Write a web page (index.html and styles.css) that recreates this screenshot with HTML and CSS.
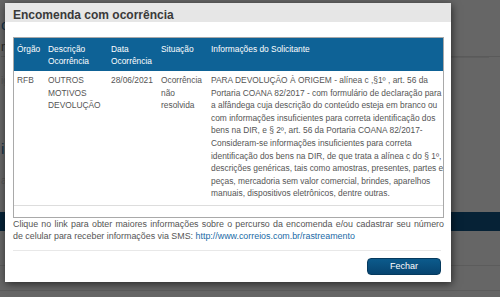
FILE: index.html
```html
<!DOCTYPE html>
<html lang="pt-BR">
<head>
    <meta charset="UTF-8">
    <meta name="viewport" content="width=device-width, initial-scale=1.0">
    <title>Encomenda com ocorrência</title>
    <link rel="stylesheet" href="styles.css">
</head>
<body>
    <div class="page">
        <div class="page-side">
            <p class="side-title">c</p>
            <p class="side-line">m</p>
            <p class="side-small">ig</p>
            <p class="side-link">i</p>
            <p class="side-small">a</p>
        </div>
        <div class="page-bar"></div>
        <div class="page-rule"></div>
        <div class="page-rule low"></div>
    </div>

    <div class="modal">
        <div class="modal-header">
            <h4>Encomenda com ocorrência</h4>
        </div>
        <div class="modal-body">
            <div class="table-wrap">
                <table class="occurrences">
                    <thead>
                        <tr>
                            <th class="col-orgao">Órgão</th>
                            <th class="col-desc">Descrição Ocorrência</th>
                            <th class="col-data">Data Ocorrência</th>
                            <th class="col-sit">Situação</th>
                            <th class="col-info">Informações do Solicitante</th>
                        </tr>
                    </thead>
                    <tbody>
                        <tr>
                            <td>RFB</td>
                            <td>OUTROS MOTIVOS DEVOLUÇÃO</td>
                            <td>28/06/2021</td>
                            <td>Ocorrência não resolvida</td>
                            <td class="col-info">PARA DEVOLUÇÃO À ORIGEM - alínea c ,§1º , art. 56 da<br>Portaria COANA 82/2017 - com formulário de declaração para<br>a alfândega cuja descrição do conteúdo esteja em branco ou<br>com informações insuficientes para correta identificação dos<br>bens na DIR, e § 2º, art. 56 da Portaria COANA 82/2017-<br>Consideram-se informações insuficientes para correta<br>identificação dos bens na DIR, de que trata a alínea c do § 1º,<br>descrições genéricas, tais como amostras, presentes, partes e<br>peças, mercadoria sem valor comercial, brindes, aparelhos<br>manuais, dispositivos eletrônicos, dentre outras.</td>
                        </tr>
                        <tr class="empty-row">
                            <td colspan="5"></td>
                        </tr>
                    </tbody>
                </table>
            </div>
            <p class="notice">Clique no link para obter maiores informações sobre o percurso da encomenda e/ou cadastrar seu número de celular para receber informações via SMS: <a href="#">http://www.correios.com.br/rastreamento</a></p>
        </div>
        <div class="modal-footer">
            <button class="btn-close">Fechar</button>
        </div>
    </div>
</body>
</html>
```

FILE: styles.css
```css
body {
    margin: 0;
    width: 500px;
    height: 297px;
    overflow: hidden;
    background-color: #666;
    font-family: "Liberation Sans", Arial, sans-serif;
    position: relative;
}

/* page behind the overlay */
.page {
    height: 297px;
}
.page-side {
    padding-left: 1px;
    height: 212px;
    font-size: 12px;
    color: #2b2b2b;
}
.page-side p {
    margin: 0;
}
.side-title {
    padding-top: 16px;
    color: #14324a;
    font-size: 15px;
}
.side-line {
    padding-top: 7px;
    padding-bottom: 2px;
    border-bottom: 1px solid #5a5a5a;
    box-shadow: 0 12px 0 -11px #5e5e5e;
}
.side-small {
    padding-top: 18px;
    font-size: 10px;
    color: #555;
}
.side-link {
    padding-top: 54px;
    font-size: 15px;
    color: #14324a;
}
.page-bar {
    height: 19px;
    background-color: #062236;
    margin-bottom: 34px;
}
.page-rule {
    border-top: 1px solid #5c5c5c;
}
.page-rule.low {
    margin-top: 24px;
}

/* modal */
.modal {
    position: absolute;
    left: 5px;
    top: 3px;
    width: 446px;
    height: 279px;
    background-color: #fff;
    box-shadow: 1px 2px 8px rgba(0, 0, 0, 0.6);
    display: flex;
    flex-direction: column;
}
.modal-header {
    background-color: #e6e6e6;
    height: 19px;
    padding: 0 8px;
    display: flex;
    align-items: flex-end;
}
.modal-header h4 {
    margin: 0;
    font-size: 12px;
    font-weight: bold;
    color: #3a3a3a;
}
.modal-body {
    padding: 15px 7px 0 8px;
}
.table-wrap {
    border: 1px solid #a9a9a9;
}
.occurrences {
    width: 100%;
    table-layout: fixed;
    border-collapse: collapse;
    font-size: 8.4px;
    line-height: 12.6px;
    color: #555;
}
.occurrences th {
    background-color: #0e6296;
    color: #fff;
    font-weight: normal;
    text-align: left;
    vertical-align: top;
    padding: 5px 3px 4px;
    line-height: 12px;
}
.occurrences td {
    vertical-align: top;
    padding: 3px 3px 5px;
}
.occurrences td.col-info {
    padding-right: 0;
    white-space: nowrap;
}
.col-orgao { width: 25px; }
.col-desc { width: 57px; }
.col-data { width: 44px; }
.col-sit { width: 44px; }
.empty-row td {
    border-top: 1px solid #ddd;
    height: 3px;
}
.notice {
    margin: 0;
    font-size: 8.9px;
    line-height: 12.4px;
    color: #555;
    text-align: justify;
}
.notice a {
    color: #1a6aa6;
    text-decoration: none;
}
.modal-footer {
    margin: 7px 10px 0 8px;
    padding-top: 7px;
    border-top: 1px solid #e8e8e8;
    display: flex;
    justify-content: flex-end;
}
.btn-close {
    width: 74px;
    height: 17px;
    border: 1px solid #063a5e;
    border-radius: 4px;
    background: linear-gradient(#0c5b8c, #074470);
    color: #fff;
    font-family: "Liberation Sans", Arial, sans-serif;
    font-size: 9px;
    padding: 0;
}
```
